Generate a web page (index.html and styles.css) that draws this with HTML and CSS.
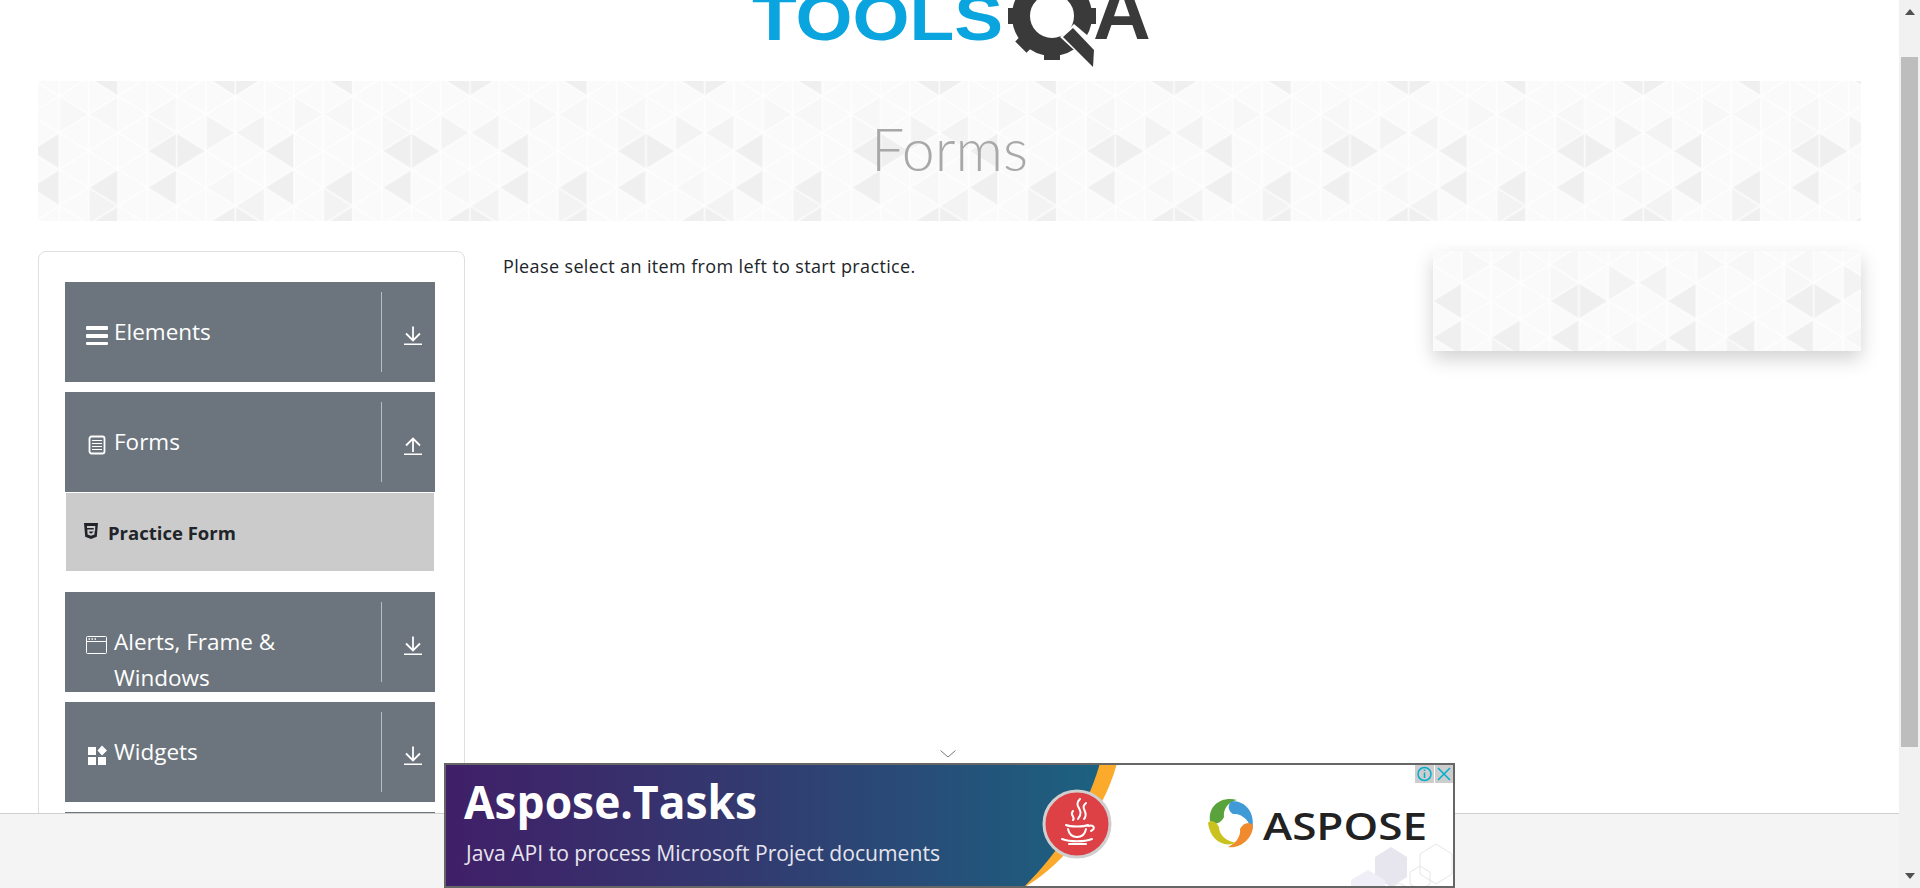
FILE: index.html
```html
<!DOCTYPE html>
<html lang="en">
<head>
<meta charset="utf-8">
<title>ToolsQA</title>
<link rel="stylesheet" href="styles.css">
</head>
<body>
<div class="page">
  <header class="logo-row">
    <svg class="logo" viewBox="0 0 415 81" width="415" height="81" aria-label="Tools QA">
      <text class="logo-tools" x="10" y="40" textLength="251" lengthAdjust="spacingAndGlyphs">TOOLS</text>
      <g class="logo-gear">
        <circle cx="310" cy="16" r="31" class="gear-ring"/>
        <rect x="302" y="-28" width="16" height="14" transform="rotate(0 310 16)"/>
        <rect x="302" y="-28" width="16" height="14" transform="rotate(45 310 16)"/>
        <rect x="302" y="-28" width="16" height="14" transform="rotate(90 310 16)"/>
        <rect x="302" y="-28" width="16" height="14" transform="rotate(135 310 16)"/>
        <rect x="302" y="-28" width="16" height="14" transform="rotate(180 310 16)"/>
        <rect x="302" y="-28" width="16" height="14" transform="rotate(225 310 16)"/>
        <rect x="302" y="-28" width="16" height="14" transform="rotate(270 310 16)"/>
        <polygon class="handle-gap" points="318,37 332,24 358,46 358,74"/>
        <polygon points="321,37 331,28 352,50 351,67"/>
      </g>
      <text class="logo-a" x="351" y="39">A</text>
    </svg>
  </header>

  <section class="banner">
    <svg class="tri-bg" width="100%" height="100%">
      <defs>
        <pattern id="tri" width="234.67" height="146.4" patternUnits="userSpaceOnUse" patternTransform="translate(21.33 0)">
          <rect width="234.67" height="146.4" class="tri-base"/>
          <g class="t-mid">
            <polygon points="146.67,33.4 146.67,70 176,51.7"/>
            <polygon points="205.33,33.4 205.33,70 176,51.7"/>
            <polygon points="29.33,106.6 29.33,143.2 58.67,124.9"/>
            <polygon points="205.33,106.6 205.33,143.2 176,124.9"/>
          </g>
          <g class="t-soft">
            <polygon points="88,33.4 88,70 117.33,51.7"/>
            <polygon points="58.67,15.1 58.67,51.7 29.33,33.4"/>
            <polygon points="176,88.3 176,124.9 146.67,106.6"/>
            <polygon points="0,15.1 0,51.7 29.33,33.4"/>
            <polygon points="117.33,15.1 117.33,51.7 88,33.4"/>
          </g>
          <g class="t-dark">
            <polygon points="58.67,-21.5 58.67,15.1 29.33,-3.2"/>
            <polygon points="58.67,124.9 58.67,161.5 29.33,143.2"/>
            <polygon points="176,-21.5 176,15.1 146.67,-3.2"/>
            <polygon points="176,-21.5 176,15.1 205.33,-3.2"/>
            <polygon points="176,124.9 176,161.5 146.67,143.2"/>
            <polygon points="176,124.9 176,161.5 205.33,143.2"/>
            <polygon points="234.67,51.7 234.67,88.3 205.33,70"/>
            <polygon points="117.33,51.7 117.33,88.3 88,70"/>
            <polygon points="117.33,51.7 117.33,88.3 146.67,70"/>
            <polygon points="58.67,88.3 58.67,124.9 29.33,106.6"/>
            <polygon points="117.33,88.3 117.33,124.9 88,106.6"/>
            <polygon points="234.67,88.3 234.67,124.9 205.33,106.6"/>
          </g>
          <path class="tri-lines" d="M0 0V146.4M29.33 0V146.4M58.67 0V146.4M88 0V146.4M117.33 0V146.4M146.67 0V146.4M176 0V146.4M205.33 0V146.4M234.67 0V146.4
            M0 -131.3L234.67 15.1M0 -94.7L234.67 51.7M0 -58.1L234.67 88.3M0 -21.5L234.67 124.9M0 15.1L234.67 161.5M0 51.7L234.67 198.1M0 88.3L234.67 234.7M0 124.9L234.67 271.3
            M0 15.1L234.67 -131.3M0 51.7L234.67 -94.7M0 88.3L234.67 -58.1M0 124.9L234.67 -21.5M0 161.5L234.67 15.1M0 198.1L234.67 51.7M0 234.7L234.67 88.3M0 271.3L234.67 124.9"/>
        </pattern>
        <pattern id="tri-side" href="#tri" patternTransform="translate(28.67 -20)"/>
      </defs>
      <rect width="100%" height="100%" fill="url(#tri)"/>
    </svg>
    <h1 class="banner-title">Forms</h1>
  </section>

  <div class="layout">
    <aside class="panel">
      <div class="bar">
        <div class="bar-title">
          <svg class="ico" viewBox="0 0 22 20" width="22" height="20"><path class="ico-fill" d="M1 1h20a1 1 0 0 1 1 1v2a1 1 0 0 1-1 1H1a1 1 0 0 1-1-1V2a1 1 0 0 1 1-1zM1 9h20a1 1 0 0 1 1 1v2a1 1 0 0 1-1 1H1a1 1 0 0 1-1-1v-2a1 1 0 0 1 1-1zM1 17h20a1 1 0 0 1 1 1v1a1 1 0 0 1-1 1H1a1 1 0 0 1-1-1v-1a1 1 0 0 1 1-1z"/></svg>
          <span>Elements</span>
        </div>
        <div class="bar-toggle">
          <svg viewBox="0 0 18 19" width="18" height="19"><path class="ico-line" d="M9 0.500V14M2 7.500L9 14.500 16 7.500M0 18.300H18"/></svg>
        </div>
      </div>
      <div class="bar bar-open">
        <div class="bar-title">
          <svg class="ico" viewBox="0 0 22 20" width="22" height="20"><rect class="ico-line" x="3.500" y="1.500" width="15" height="17" rx="2"/><path class="ico-thin" d="M6 5.500H16M6 8.500H16M6 11.500H16M6 14.500H16"/></svg>
          <span>Forms</span>
        </div>
        <div class="bar-toggle">
          <svg viewBox="0 0 18 19" width="18" height="19"><path class="ico-line" d="M9 16V2.500M2 9.500L9 2.500 16 9.500M0 18.300H18"/></svg>
        </div>
      </div>
      <ul class="submenu">
        <li class="subitem">
          <svg class="sub-ico" viewBox="0 0 14 16" width="14" height="16"><path d="M0 0H14L12.800 13.800 7 16 1.200 13.800zM3 3V5H9.800L9.700 6.500H3.300L3.600 11.500 7 12.800 10.400 11.500 10.700 8.300H8.700L8.600 10 7 10.600 5.400 10 5.300 8.400H11L11.300 3z" fill-rule="evenodd"/></svg>
          <span>Practice Form</span>
        </li>
      </ul>
      <div class="bar">
        <div class="bar-title">
          <svg class="ico" viewBox="0 0 22 20" width="22" height="20"><rect class="ico-thin" x="0.500" y="1.500" width="20" height="17" rx="1"/><path class="ico-thin" d="M0.500 6.500H20.500"/><path class="ico-dots" d="M2.500 4H4M5.500 4H7M8.500 4H10"/></svg>
          <span>Alerts, Frame &amp; Windows</span>
        </div>
        <div class="bar-toggle">
          <svg viewBox="0 0 18 19" width="18" height="19"><path class="ico-line" d="M9 0.500V14M2 7.500L9 14.500 16 7.500M0 18.300H18"/></svg>
        </div>
      </div>
      <div class="bar">
        <div class="bar-title">
          <svg class="ico" viewBox="0 0 22 20" width="22" height="20"><path class="ico-fill" d="M2 2H10V10H2zM2 12H10V20H2zM12 12H20V20H12zM16 0.500L21 5.500 16 10.500 11.500 5.500z"/></svg>
          <span>Widgets</span>
        </div>
        <div class="bar-toggle">
          <svg viewBox="0 0 18 19" width="18" height="19"><path class="ico-line" d="M9 0.500V14M2 7.500L9 14.500 16 7.500M0 18.300H18"/></svg>
        </div>
      </div>
      <div class="bar"></div>
    </aside>

    <main class="content">
      <p class="intro">Please select an item from left to start practice.</p>
    </main>

    <aside class="side-ad">
      <svg class="tri-bg" width="100%" height="100%"><rect width="100%" height="100%" fill="url(#tri-side)"/></svg>
    </aside>
  </div>

  <footer class="footer">
    <div class="ad">
      <svg class="ad-chevron" viewBox="0 0 16 8" width="16" height="8"><path d="M0.500 0.500L8 7 15.500 0.500"/></svg>
      <svg class="ad-art" viewBox="2 2 1007 121" width="1007" height="121">
        <defs>
          <linearGradient id="adgrad" x1="0" x2="1" y1="0" y2="0">
            <stop offset="0" stop-color="#401f68"/>
            <stop offset="0.45" stop-color="#33396f"/>
            <stop offset="1" stop-color="#1c6180"/>
          </linearGradient>
        </defs>
        <rect x="0" y="0" width="1011" height="125" fill="#fff"/>
        <path d="M0 0H673C660 50 620 102 579 125H0z" fill="#fbaa2c"/>
        <path d="M0 0H656C642 50 612 92 579 125H0z" fill="url(#adgrad)"/>
        <text class="ad-h" x="20" y="56" textLength="293" lengthAdjust="spacingAndGlyphs">Aspose.Tasks</text>
        <text class="ad-sub" x="22" y="98" textLength="474" lengthAdjust="spacingAndGlyphs">Java API to process Microsoft Project documents</text>
        <circle cx="633" cy="61" r="33" fill="#de4145" stroke="#cfcfcf" stroke-width="3"/>
        <g class="java">
          <path d="M636 36C628 44 642 46 634 56M642 40C635 46 646 49 640 56M629 48C625 52 632 54 629 57"/>
          <path d="M622 62C626 64 640 64 644 62M624 66C625 71 628 74 633 74C638 74 641 71 642 66M644 63C650 61 652 66 647 68M618 76C626 79 640 79 648 76M625 81H642"/>
        </g>
        <g class="swirl">
          <path fill="#5aa33c" d="M766 58C764 42 778 33 793 37C784 39 779 46 780 54C777 60 771 63 766 58z"/>
          <path fill="#3f9ad6" d="M788 38C802 38 812 50 808 68C806 58 798 50 789 51C784 48 783 42 788 38z"/>
          <path fill="#f08a2c" d="M809 62C809 76 796 86 784 84C793 80 797 72 796 66C799 60 805 58 809 62z"/>
          <path fill="#c9c21f" d="M764 60C766 76 778 85 792 80C782 78 775 72 775 64C772 58 766 56 764 60z"/>
        </g>
        <text class="ad-brand" x="819" y="77" textLength="164" lengthAdjust="spacingAndGlyphs">ASPOSE</text>
        <g class="hex">
          <polygon class="hex-fill" points="947,84 963,94 963,114 947,124 931,114 931,94"/>
          <polygon class="hex-pale" points="924,107 941,117 941,137 924,147 907,137 907,117"/>
          <polygon class="hex-line" points="992,81 1008,91 1008,111 992,121 976,111 976,91"/>
          <polygon class="hex-line" points="976,103 986,109 986,121 976,127 966,121 966,109"/>
          <polygon class="hex-line" points="955,120 968,127 968,140 955,147 942,140 942,127"/>
        </g>
        <rect class="ad-btn" x="971" y="2" width="19" height="18"/>
        <rect class="ad-btn" x="991" y="2" width="18" height="18"/>
        <circle class="ad-mark" cx="980.500" cy="11" r="6.500"/>
        <path class="ad-mark" d="M980.500 9.500V15M980.500 6.500V8"/>
        <path class="ad-mark" d="M994 5L1006 17M1006 5L994 17"/>
      </svg>
    </div>
  </footer>
</div>
<div class="scrollbar">
  <svg class="sb-arrow" viewBox="0 0 10 6" width="10" height="6"><path d="M5 0L10 6H0z"/></svg>
  <div class="sb-thumb"></div>
  <svg class="sb-arrow" viewBox="0 0 10 6" width="10" height="6"><path d="M5 6L0 0H10z"/></svg>
</div>
</body>
</html>
```
FILE: styles.css
```css
* { box-sizing: border-box; }
html, body { margin: 0; height: 888px; overflow: hidden; background: #fff; }
body {
  display: flex;
  font-family: "Open Sans", "Noto Sans", sans-serif;
  color: #212529;
}
.page { flex: 1; min-width: 0; position: relative; padding: 0 38px; overflow: hidden; }

.logo-row { height: 81px; display: flex; justify-content: center; }
.logo { display: block; overflow: hidden; }
.logo-tools { font: 700 64px "Liberation Sans", sans-serif; fill: #0aa5df; }
.logo-a { font: 700 80px "Liberation Sans", sans-serif; fill: #3a3a3a; }
.logo-gear { fill: #3a3a3a; }
.gear-ring { fill: none; stroke: #3a3a3a; stroke-width: 18px; }
.handle-gap { fill: #fff; }

.banner { position: relative; height: 140px; display: flex; justify-content: center; align-items: center; }
.tri-bg { position: absolute; inset: 0; display: block; filter: blur(.6px); }
.tri-base { fill: #fafafa; }
.t-soft { fill: #f7f7f7; }
.t-mid { fill: #f3f3f3; }
.t-dark { fill: #efefef; }
.tri-lines { stroke: #fff; stroke-opacity: .75; stroke-width: 1.6px; fill: none; }
.banner-title {
  position: relative;
  margin: -6px 0 0;
  font-family: "Lato", "Open Sans", sans-serif;
  font-weight: 300;
  font-size: 59px;
  line-height: 1;
  color: #a8a8a8;
}

.layout { display: flex; align-items: flex-start; margin-top: 30px; }
.panel {
  flex: 0 0 427px;
  height: 700px;
  padding: 30px 29px 0 26px;
  border: 1px solid #dfdfdf;
  border-radius: 8px;
}
.bar { display: flex; height: 100px; margin-bottom: 10px; overflow: hidden; background: #6c757d; color: #fff; }
.bar-open { margin-bottom: 0; }
.bar-title {
  flex: 1;
  display: flex;
  align-items: flex-start;
  padding: 32px 20px 0 21px;
  font-size: 22.5px;
  line-height: 36px;
}
.bar-title span { margin-left: 6px; }
.ico { flex: none; margin-top: 11px; }
.ico-fill { fill: #fff; }
.ico-line { fill: none; stroke: #fff; stroke-width: 1.8px; }
.ico-thin { fill: none; stroke: #fff; stroke-width: 1px; }
.ico-dots { fill: none; stroke: #fff; stroke-width: 1.5px; }
.bar-toggle {
  flex: 0 0 54px;
  height: 80px;
  margin-top: 10px;
  padding: 34px 0 0 22px;
  border-left: 1px solid #b8bcc0;
}
.bar-toggle svg { display: block; }

.submenu { list-style: none; margin: 0 1px 21px; padding: 0; }
.subitem {
  display: flex;
  align-items: center;
  height: 78px;
  margin-top: 1px;
  padding-left: 18px;
  background: #cbcbcb;
  font-size: 18.5px;
  font-weight: 700;
}
.sub-ico { flex: none; margin-right: 10px; margin-top: -3px; fill: #212529; }

.content { flex: 1; padding: 0 0 0 38px; }
.intro { margin: 0; font-size: 18px; line-height: 30px; letter-spacing: .37px; }
.side-ad { position: relative; flex: 0 0 428px; height: 100px; box-shadow: 0 8px 18px rgba(0, 0, 0, .18); }

.footer {
  position: absolute;
  left: 0;
  right: 0;
  bottom: 0;
  height: 75px;
  background: #f4f4f4;
  border-top: 1px solid #cfcfcf;
}
.ad { position: absolute; left: 444px; bottom: 0; width: 1011px; height: 125px; border: 2px solid #666; }
.ad-art { display: block; }
.ad-chevron { position: absolute; top: -15px; left: 494px; fill: none; stroke: #777; stroke-width: 1px; }
.ad-h { font: 700 46px "Open Sans", sans-serif; fill: #fff; }
.ad-sub { font: 400 22px "Open Sans", sans-serif; fill: #e6e4ee; }
.ad-brand { font: 600 38px "Open Sans", sans-serif; fill: #222; }
.java { fill: none; stroke: #fff; stroke-width: 2px; stroke-linecap: round; }
.hex-fill { fill: #e7e5ee; }
.hex-pale { fill: #f0eef6; }
.hex-line { fill: none; stroke: #e6e6e6; stroke-width: 1px; }
.ad-btn { fill: #cdcdcd; }
.ad-mark { fill: none; stroke: #00aecd; stroke-width: 1.5px; }

.scrollbar {
  flex: 0 0 21px;
  display: flex;
  flex-direction: column;
  align-items: center;
  justify-content: space-between;
  height: 888px;
  padding: 9px 0;
  background: #f1f1f1;
}
.sb-arrow { display: block; fill: #505050; }
.sb-thumb { width: 17px; height: 690px; margin-top: 30px; margin-bottom: 115px; background: #bdbdbd; }
```
